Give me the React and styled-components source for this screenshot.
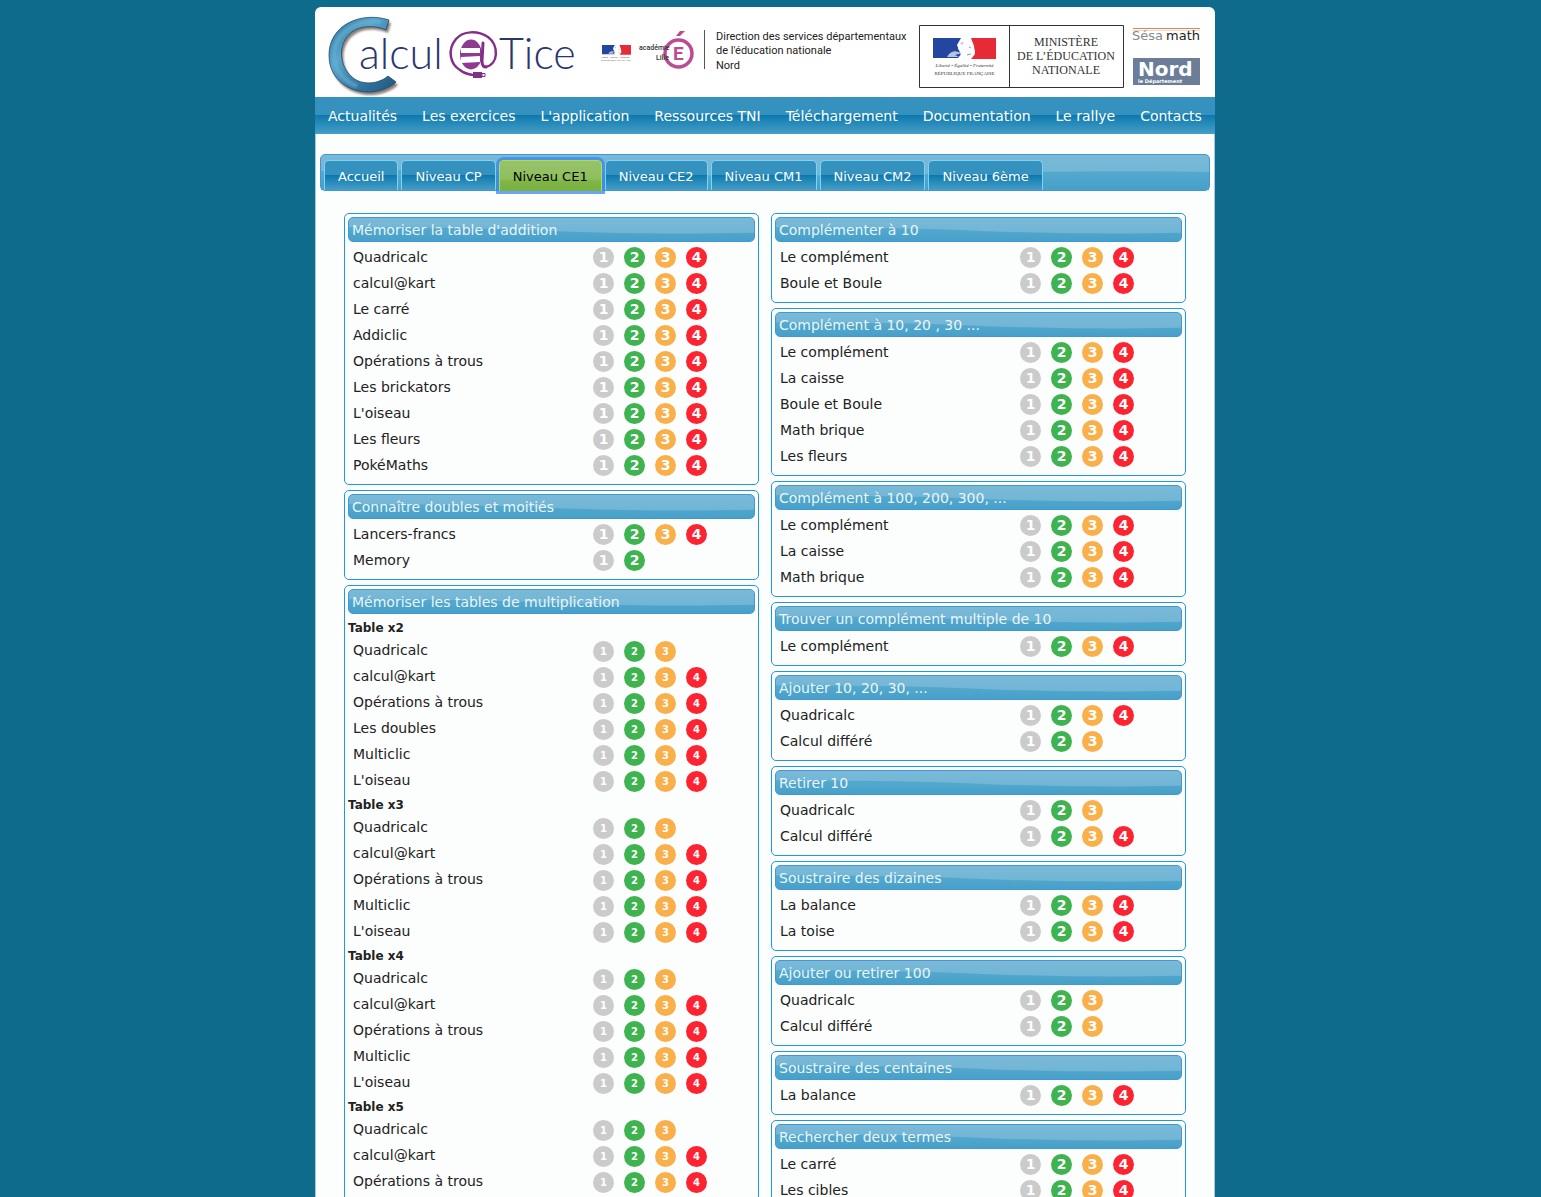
import React from "react";
import styled, { createGlobalStyle, css } from "styled-components";

const Global = createGlobalStyle`
  *, *::before, *::after { box-sizing: border-box; }
  body { margin: 0; background: #0e6b8c; color: #222; font: 14px/26px "DejaVu Sans", Verdana, sans-serif; }
  ul { list-style: none; margin: 0; padding: 0; }
  a { color: inherit; text-decoration: none; }
`;

const Shell = styled.div`
  height: 100vh;
  padding: 7px 11px 0 0;
  overflow-y: auto;
  scrollbar-width: none;
  background: #0e6b8c;
`;

const Page = styled.div`
  max-width: 900px;
  min-height: 100%;
  margin: 0 auto;
  display: flex;
  flex-direction: column;
`;

const Header = styled.header`
  display: flex;
  align-items: center;
  height: 90px;
  padding: 0 15px 0 10px;
  background: #fff;
  border-radius: 6px 6px 0 0;
  svg { display: block; flex: none; overflow: visible; }
`;

const Partners = styled.div`
  display: flex;
  align-items: center;
  gap: 9px;
  margin-left: auto;
  padding-top: 9px;
`;

const Stack = styled.div`
  display: flex;
  flex-direction: column;
  gap: 14px;
`;

const glossyDark = "linear-gradient(#3591bd 0 49%, #0e78ae 50%, #1f86b6 65%, #479dc8 100%)";

const Nav = styled.nav`
  display: flex;
  justify-content: space-between;
  align-items: center;
  height: 37px;
  padding: 0 13px;
  background: ${glossyDark};
  color: #fff;
`;

const Main = styled.main`
  flex: 1;
  padding: 20px 4px 8px;
  background: #fcfdfd;
  border: solid #a6c9e2;
  border-width: 0 1px;
`;

const gloss = css`
  position: relative;
  isolation: isolate;
  overflow: hidden;
  background: linear-gradient(#7ab9d8, #6cb3d3);
  border: 1px solid #4297d7;
  border-radius: 5px;
`;

const Wave = styled.svg`
  position: absolute;
  inset: 0;
  z-index: -1;
  width: 100%;
  height: 100%;
`;

const TabBar = styled.nav`
  ${gloss}
  overflow: visible;
  display: flex;
  gap: 3px;
  height: 37px;
  padding: 5px 3px 0;
`;

const Tab = styled.a`
  display: flex;
  align-items: center;
  padding: 2px 13px 0;
  border: 1px solid #77d5f7;
  border-bottom: 0;
  border-radius: 5px 5px 0 0;
  background: ${glossyDark};
  color: #fff;
  font-size: 13px;
  ${(p) => p.$active && css`
    z-index: 1;
    height: 31px;
    border-color: #acdd4a;
    background: linear-gradient(#97c26b, #8fbf5c 60%, #7fb545 66%, #7bb13f);
    color: #000;
    box-shadow: 0 0 0 3px rgba(59, 133, 240, 0.75);
  `}
`;

const Columns = styled.div`
  display: grid;
  grid-template-columns: 1fr 1fr;
  align-items: start;
  gap: 12px;
  padding: 22px 24px 0;
`;

const Column = styled.div`
  display: grid;
  gap: 5px;
`;

const Panel = styled.section`
  padding: 3px 3px 6px;
  border: 1px solid #1e98e0;
  border-radius: 5px;
`;

const Title = styled.h2`
  ${gloss}
  height: 25px;
  margin: 0 0 2px;
  padding: 0 3px;
  color: #eaf5f7;
  font-size: 14px;
  font-weight: 400;
  line-height: 24px;
`;

const Subtitle = styled.h3`
  height: 21px;
  margin: 0;
  font-size: 12px;
  font-weight: 700;
  line-height: 25px;
`;

const Row = styled.li`
  display: flex;
  align-items: center;
  height: 26px;
  padding-left: 5px;
`;

const Name = styled.span`
  width: 240px;
`;

const Levels = styled.span`
  display: flex;
  gap: 10px;
  padding-top: ${(p) => (p.$small ? 2 : 0)}px;
`;

const Level = styled.a`
  width: 21px;
  height: 21px;
  border-radius: 50%;
  background: ${(p) => p.$color};
  color: #fff;
  font-size: ${(p) => (p.$small ? 10 : 14)}px;
  font-weight: 700;
  line-height: 21px;
  text-align: center;
`;

const levelColors = ["#cbcbcb", "#3eb34f", "#f9b04b", "#fd2432"];

const menu = ["Actualités", "Les exercices", "L'application", "Ressources TNI", "Téléchargement", "Documentation", "Le rallye", "Contacts"];
const tabs = ["Accueil", "Niveau CP", "Niveau CE1", "Niveau CE2", "Niveau CM1", "Niveau CM2", "Niveau 6ème"];

const left = [
  { title: "Mémoriser la table d'addition", groups: [{ rows: [["Quadricalc", 4], ["calcul@kart", 4], ["Le carré", 4], ["Addiclic", 4], ["Opérations à trous", 4], ["Les brickators", 4], ["L'oiseau", 4], ["Les fleurs", 4], ["PokéMaths", 4]] }] },
  { title: "Connaître doubles et moitiés", groups: [{ rows: [["Lancers-francs", 4], ["Memory", 2]] }] },
  {
    title: "Mémoriser les tables de multiplication",
    groups: [
      { name: "Table x2", rows: [["Quadricalc", 3], ["calcul@kart", 4], ["Opérations à trous", 4], ["Les doubles", 4], ["Multiclic", 4], ["L'oiseau", 4]] },
      { name: "Table x3", rows: [["Quadricalc", 3], ["calcul@kart", 4], ["Opérations à trous", 4], ["Multiclic", 4], ["L'oiseau", 4]] },
      { name: "Table x4", rows: [["Quadricalc", 3], ["calcul@kart", 4], ["Opérations à trous", 4], ["Multiclic", 4], ["L'oiseau", 4]] },
      { name: "Table x5", rows: [["Quadricalc", 3], ["calcul@kart", 4], ["Opérations à trous", 4]] },
    ],
  },
];

const right = [
  { title: "Complémenter à 10", groups: [{ rows: [["Le complément", 4], ["Boule et Boule", 4]] }] },
  { title: "Complément à 10, 20 , 30 ...", groups: [{ rows: [["Le complément", 4], ["La caisse", 4], ["Boule et Boule", 4], ["Math brique", 4], ["Les fleurs", 4]] }] },
  { title: "Complément à 100, 200, 300, ...", groups: [{ rows: [["Le complément", 4], ["La caisse", 4], ["Math brique", 4]] }] },
  { title: "Trouver un complément multiple de 10", groups: [{ rows: [["Le complément", 4]] }] },
  { title: "Ajouter 10, 20, 30, ...", groups: [{ rows: [["Quadricalc", 4], ["Calcul différé", 3]] }] },
  { title: "Retirer 10", groups: [{ rows: [["Quadricalc", 3], ["Calcul différé", 4]] }] },
  { title: "Soustraire des dizaines", groups: [{ rows: [["La balance", 4], ["La toise", 4]] }] },
  { title: "Ajouter ou retirer 100", groups: [{ rows: [["Quadricalc", 3], ["Calcul différé", 3]] }] },
  { title: "Soustraire des centaines", groups: [{ rows: [["La balance", 4]] }] },
  { title: "Rechercher deux termes", groups: [{ rows: [["Le carré", 4], ["Les cibles", 4]] }] },
];

function GlossWave() {
  return (
    <Wave viewBox="0 0 400 25" preserveAspectRatio="none" aria-hidden="true">
      <defs>
        <linearGradient id="wave" x1="0" y1="0" x2="0" y2="1">
          <stop offset="0" stopColor="#55a9ce" />
          <stop offset="1" stopColor="#47a0c9" />
        </linearGradient>
      </defs>
      <path d="M0 10 C70 10 130 11 180 13 C240 16 310 18 400 16 V25 H0Z" fill="url(#wave)" />
    </Wave>
  );
}

function BarWave() {
  return (
    <Wave viewBox="0 0 890 37" preserveAspectRatio="none" aria-hidden="true">
      <path d="M0 17 C120 15 200 17 300 20 C450 24 600 20 720 18 C790 17 840 17 890 18 V37 H0Z" fill="url(#wave)" />
    </Wave>
  );
}

function Logo() {
  return (
    <svg width="256" height="90" viewBox="0 0 256 90" role="img" aria-label="Calcul@Tice">
      <defs>
        <linearGradient id="bigC" x1="0" y1="0" x2="1" y2="1">
          <stop offset="0" stopColor="#2f6f96" />
          <stop offset=".35" stopColor="#5aa6cc" />
          <stop offset=".6" stopColor="#3a7fa8" />
          <stop offset="1" stopColor="#1d5580" />
        </linearGradient>
        <filter id="soft" x="-20%" y="-20%" width="140%" height="140%"><feGaussianBlur stdDeviation="1" /></filter>
      </defs>
      <path d="M64 13 C36 4 4 18 4 48 C4 74 26 86 46 85 C57 84 66 80 71 75 L63 69 C54 77 37 79 27 70 C12 57 13 32 30 23 C40 18 52 19 61 23Z" transform="translate(2 3)" fill="#75675f" opacity=".85" filter="url(#soft)" />
      <path d="M64 13 C36 4 4 18 4 48 C4 74 26 86 46 85 C57 84 66 80 71 75 L63 69 C54 77 37 79 27 70 C12 57 13 32 30 23 C40 18 52 19 61 23Z" fill="url(#bigC)" stroke="#234a6b" strokeWidth=".8" />
      <path d="M56 15 C34 12 10 24 9 47 C9 62 18 74 32 79" fill="none" stroke="#68b3d6" strokeWidth="4" opacity=".6" filter="url(#soft)" />
      <g fontFamily="Lato, sans-serif" fontWeight="300" fontSize="43" fill="#2b3570">
        <text x="34" y="62">alcul</text>
        <text x="174" y="62">Tice</text>
      </g>
      <g fill="none" stroke="#842f87" strokeLinecap="round">
        <path d="M160 60 C174 58 174 38 163 30 C152 23 138 24 131 32 C122 43 125 57 135 63 Q140 67 148 68" strokeWidth="2.500" />
        <ellipse cx="146" cy="47.500" rx="11" ry="15" fill="#8d3a91" stroke="none" />
        <path d="M158 36 L157 54 Q157 60 161 60" strokeWidth="3" />
      </g>
      <path d="M136 41 H155 V46 H136Z M136 50 L155 49 V55 L136 56Z" fill="#fff" />
      <path d="M148 65 H157 V71 H148Z" fill="#842f87" />
      <path d="M157 66.500 H160 V69.500 H157Z" fill="none" stroke="#842f87" />
    </svg>
  );
}

function Flag() {
  return (
    <g>
      <path d="M0 0 H28 L24 7 L29 20 H0Z" fill="#2347a0" />
      <path d="M38 0 H63 V21 H38 L42 16 L41 8Z" fill="#e62a36" />
      <path d="M29 0 Q39 2 40 9 L42 13 L39 20 H25 L30 14 L25 11Z" fill="#fff" />
      <path d="M16 16 Q20 12 25 14 L29 15 L22 17 L26 19 H14Z M27 5 L31 4 L29 7Z" fill="#b8c4de" />
      <path d="M36 9 L38 10 M34 17 L38 16" stroke="#777" strokeWidth=".8" />
    </g>
  );
}

function Academie() {
  return (
    <svg width="310" height="63" viewBox="0 0 310 63" role="img" aria-label="Académie de Lille">
      <g transform="translate(2 20) scale(.46)"><Flag /></g>
      <text x="1" y="33" fontFamily="Liberation Serif, serif" fontSize="2.500" fontStyle="italic" fill="#333">Liberté · Égalité · Fraternité</text>
      <text x="1" y="36" fontFamily="Liberation Serif, serif" fontSize="2.500" fill="#222">RÉPUBLIQUE FRANÇAISE</text>
      <circle cx="78.500" cy="28.500" r="13.500" fill="#fff" stroke="#bf4a94" strokeWidth="3.500" />
      <text x="73" y="35" fontFamily="Roboto, sans-serif" fontWeight="700" fontSize="19" fill="#bf4a94">E</text>
      <path d="M76 11 L80 6 H85 L80 11Z" fill="#bf4a94" />
      <g fontFamily="Roboto, sans-serif" fontSize="7" fontWeight="500" fill="#333">
        <text x="39" y="25">académie</text>
        <text x="56" y="35">Lille</text>
      </g>
      <path d="M104.500 5 V44" stroke="#555" />
      <g fontFamily="Roboto, sans-serif" fontSize="11" fill="#222">
        <text x="116" y="15">Direction des services départementaux</text>
        <text x="116" y="29">de l'éducation nationale</text>
        <text x="116" y="44">Nord</text>
      </g>
    </svg>
  );
}

function Ministere() {
  return (
    <svg width="205" height="63" viewBox="0 0 205 63" role="img" aria-label="Ministère de l'Éducation nationale">
      <path d="M.5 .5 H204.500 V62.500 H.5Z M90.500 0 V63" fill="none" stroke="#333" />
      <g transform="translate(14 13)"><Flag /></g>
      <g fontFamily="Liberation Serif, serif" fill="#333" textAnchor="middle">
        <text x="45.500" y="42" fontSize="5" fontStyle="italic">Liberté • Égalité • Fraternité</text>
        <text x="45.500" y="50" fontSize="5">RÉPUBLIQUE FRANÇAISE</text>
        <text x="147" y="21" fontSize="12">MINISTÈRE</text>
        <text x="147" y="35" fontSize="12">DE L’ÉDUCATION</text>
        <text x="147" y="49" fontSize="12">NATIONALE</text>
      </g>
    </svg>
  );
}

function Sesamath() {
  return (
    <svg width="67" height="16" viewBox="0 0 67 16" role="img" aria-label="Sésamath">
      <path d="M0 .5 H67" stroke="#f08142" />
      <path d="M0 2.500 H67" stroke="#ddd" />
      <text x="-1" y="12" fontFamily="DejaVu Sans, sans-serif" fontSize="13" fill="#888">Sésa</text>
      <text x="67" y="12" textAnchor="end" fontFamily="DejaVu Sans, sans-serif" fontSize="13" fill="#222">math</text>
    </svg>
  );
}

function Nord() {
  return (
    <svg width="67" height="27" viewBox="0 0 67 27" role="img" aria-label="Nord, le Département">
      <path d="M0 0 H67 V27 H0Z" fill="#6b7d98" />
      <text x="5" y="18" fontFamily="DejaVu Sans, sans-serif" fontWeight="700" fontSize="20" fill="#fff">Nord</text>
      <text x="5" y="25" fontFamily="DejaVu Sans, sans-serif" fontWeight="700" fontSize="5" fill="#fff">le Département</text>
    </svg>
  );
}

function Exercises({ title, groups }) {
  return (
    <Panel>
      <Title><GlossWave />{title}</Title>
      {groups.map((group, i) => (
        <React.Fragment key={i}>
          {group.name && <Subtitle>{group.name}</Subtitle>}
          <ul>
            {group.rows.map(([name, count]) => (
              <Row key={name}>
                <Name>{name}</Name>
                <Levels $small={!!group.name}>
                  {levelColors.slice(0, count).map((color, n) => (
                    <Level key={n} href="#" $color={color} $small={!!group.name} aria-label={`${name}, niveau ${n + 1}`}>{n + 1}</Level>
                  ))}
                </Levels>
              </Row>
            ))}
          </ul>
        </React.Fragment>
      ))}
    </Panel>
  );
}

export default function App() {
  return (
    <>
      <Global />
      <Shell>
        <Page>
          <Header>
            <Logo />
            <Partners>
              <Academie />
              <Ministere />
              <Stack><Sesamath /><Nord /></Stack>
            </Partners>
          </Header>
          <Nav>{menu.map((m) => <a key={m} href="#">{m}</a>)}</Nav>
          <Main>
            <TabBar>
              <BarWave />
              {tabs.map((t) => <Tab key={t} href="#" $active={t === "Niveau CE1"}>{t}</Tab>)}
            </TabBar>
            <Columns>
              <Column>{left.map((p) => <Exercises key={p.title} {...p} />)}</Column>
              <Column>{right.map((p) => <Exercises key={p.title} {...p} />)}</Column>
            </Columns>
          </Main>
        </Page>
      </Shell>
    </>
  );
}
